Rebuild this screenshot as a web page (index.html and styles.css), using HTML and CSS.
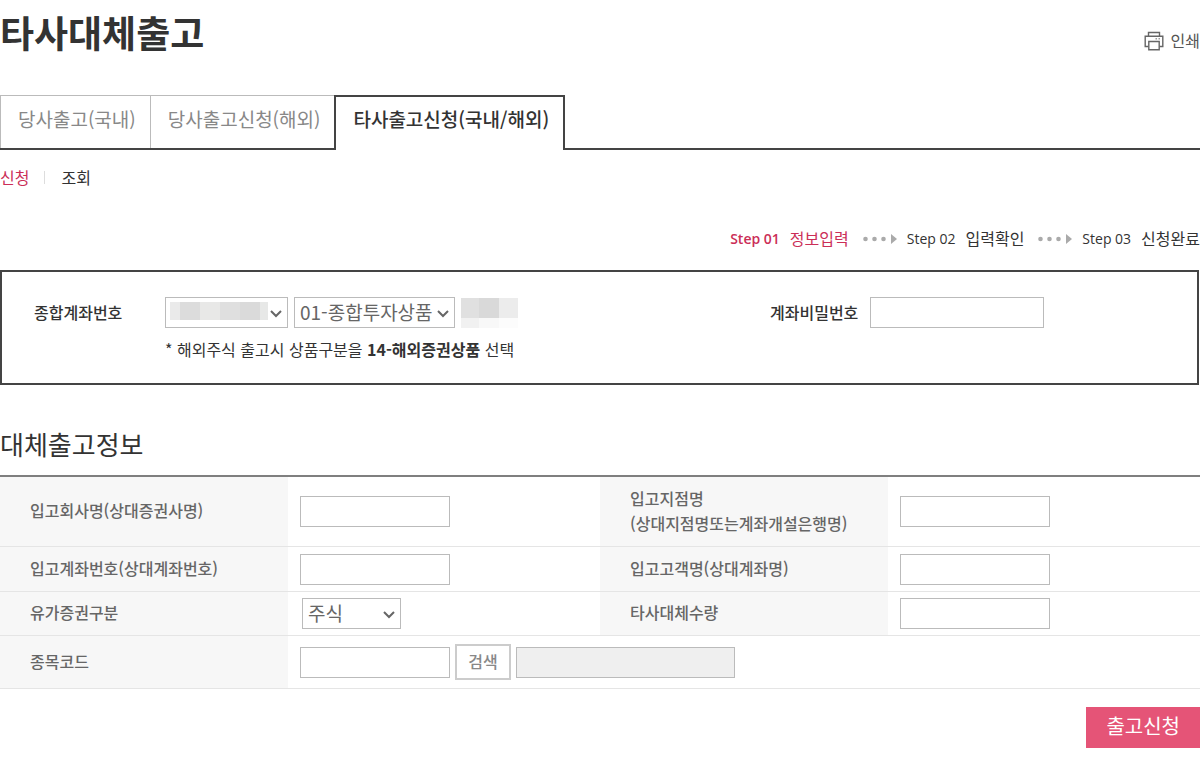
FILE: index.html
```html
<!DOCTYPE html>
<html lang="ko">
<head>
  <meta charset="UTF-8">
  <meta name="viewport" content="width=device-width, initial-scale=1.0">
  <title>타사대체출고</title>
  <link rel="stylesheet" href="styles.css">
</head>
<body>
  <header class="page-head">
    <h1>타사대체출고</h1>
    <button type="button" class="print-btn" onclick="window.print()">
      <svg width="20" height="20" viewBox="0 0 20 20" fill="none" stroke="#666" stroke-width="1.4" aria-hidden="true">
        <path d="M4.5 5V1.5h11V5M4.5 15.5H1.2V5.3h17.6v10.2h-3.3"/>
        <path d="M4.8 10.5h10.4v8.3H4.8z"/>
        <path d="M11.5 7.8H13M14.5 7.8H16" stroke="#999"/>
      </svg>
      인쇄
    </button>
  </header>

  <nav class="tabs">
    <a href="#">당사출고(국내)</a>
    <a href="#">당사출고신청(해외)</a>
    <a href="#" class="active">타사출고신청(국내/해외)</a>
  </nav>

  <nav class="sub-menu">
    <a href="#" class="active">신청</a>
    <a href="#">조회</a>
  </nav>

  <ol class="steps">
    <li class="active"><span class="num">Step 01</span>정보입력</li>
    <li>
      <svg width="34" height="10" viewBox="0 0 34 10" fill="#aaa" aria-hidden="true"><circle cx="2.5" cy="5" r="2.3"/><circle cx="11.5" cy="5" r="2.3"/><circle cx="20.5" cy="5" r="2.3"/><path d="M28 0l6 5-6 5z"/></svg>
      <span class="num">Step 02</span>입력확인
    </li>
    <li>
      <svg width="34" height="10" viewBox="0 0 34 10" fill="#aaa" aria-hidden="true"><circle cx="2.5" cy="5" r="2.3"/><circle cx="11.5" cy="5" r="2.3"/><circle cx="20.5" cy="5" r="2.3"/><path d="M28 0l6 5-6 5z"/></svg>
      <span class="num">Step 03</span>신청완료
    </li>
  </ol>

  <form id="transferForm">
    <div class="account-box">
      <div class="account">
        <label for="accountNo">종합계좌번호</label>
        <div>
          <div class="fields">
            <select id="accountNo" class="account-no" name="accountNo">
              <option value=""></option>
            </select>
            <select class="product" name="product" aria-label="상품구분">
              <option>01-종합투자상품</option>
              <option>14-해외증권상품</option>
            </select>
            <span class="masked-name"></span>
          </div>
          <p class="note">* 해외주식 출고시 상품구분을 <strong>14-해외증권상품</strong> 선택</p>
        </div>
      </div>
      <div class="password">
        <label for="accountPw">계좌비밀번호</label>
        <input type="password" id="accountPw" name="accountPw">
      </div>
    </div>

    <h2>대체출고정보</h2>
    <table class="info-table">
      <colgroup>
        <col class="col-th"><col class="col-td"><col class="col-th"><col class="col-td">
      </colgroup>
      <tbody>
        <tr class="tall">
          <th scope="row"><label for="company">입고회사명(상대증권사명)</label></th>
          <td><div class="fields"><input type="text" id="company" name="company"></div></td>
          <th scope="row"><label for="branch">입고지점명<br>(상대지점명또는계좌개설은행명)</label></th>
          <td><div class="fields"><input type="text" id="branch" name="branch"></div></td>
        </tr>
        <tr>
          <th scope="row"><label for="targetAccount">입고계좌번호(상대계좌번호)</label></th>
          <td><div class="fields"><input type="text" id="targetAccount" name="targetAccount"></div></td>
          <th scope="row"><label for="customer">입고고객명(상대계좌명)</label></th>
          <td><div class="fields"><input type="text" id="customer" name="customer"></div></td>
        </tr>
        <tr class="type-row">
          <th scope="row"><label for="stockType">유가증권구분</label></th>
          <td>
            <div class="fields">
              <select id="stockType" name="stockType">
                <option>주식</option>
              </select>
            </div>
          </td>
          <th scope="row"><label for="quantity">타사대체수량</label></th>
          <td><div class="fields"><input type="text" id="quantity" name="quantity"></div></td>
        </tr>
        <tr class="search-row">
          <th scope="row"><label for="stockCode">종목코드</label></th>
          <td colspan="3">
            <div class="fields">
              <input type="text" id="stockCode" name="stockCode">
              <button type="button" class="search-btn">검색</button>
              <input type="text" class="stock-name" name="stockName" aria-label="종목명" readonly>
            </div>
          </td>
        </tr>
      </tbody>
    </table>

    <div class="actions">
      <button type="submit" class="submit-btn">출고신청</button>
    </div>
  </form>
</body>
</html>
```
FILE: styles.css
```css
* {
  box-sizing: border-box;
}
body {
  margin: 0;
  font-family: "Noto Sans CJK KR", sans-serif;
  font-size: 16px;
  line-height: 25px;
  color: #333;
  background: #fff;
}
a {
  color: inherit;
  text-decoration: none;
}
button,
input,
select {
  font-family: inherit;
  margin: 0;
}
button {
  cursor: pointer;
}

/* header */
.page-head {
  display: flex;
  justify-content: space-between;
  align-items: flex-start;
  height: 95px;
}
h1 {
  margin: 7px 0 0;
  font-size: 37px;
  line-height: 50px;
  font-weight: 700;
}
.print-btn {
  display: flex;
  align-items: center;
  gap: 7px;
  margin-top: 28px;
  padding: 0;
  border: none;
  background: none;
  color: #555;
  font-size: 16px;
  line-height: 25px;
}

/* tabs */
.tabs {
  display: flex;
  height: 55px;
  border-bottom: 2px solid #444;
}
.tabs a {
  height: 53px;
  padding: 0 14px 0 17px;
  border: 1px solid #bbb;
  border-width: 1px 0 0 1px;
  font-size: 19px;
  line-height: 46px;
  color: #888;
}
.tabs .active {
  height: 55px;
  border: 2px solid #444;
  border-bottom: none;
  background: #fff;
  font-weight: 500;
  line-height: 44px;
  color: #333;
}
.sub-menu {
  display: flex;
  align-items: center;
  margin-top: 15px;
}
.sub-menu a + a {
  margin-left: 15px;
  padding-left: 16px;
  line-height: 13px;
  border-left: 1px solid #ddd;
}
.sub-menu .active {
  color: #cb2e57;
}

/* steps */
.steps {
  display: flex;
  justify-content: flex-end;
  gap: 14px;
  margin: 36px 0 19px;
  padding: 0;
  list-style: none;
}
.steps li {
  display: flex;
  align-items: center;
}
.steps svg {
  margin-right: 10px;
}
.steps .num {
  margin-right: 10px;
  font-family: "Open Sans", sans-serif;
  font-size: 14px;
}
.steps .active {
  color: #cb2e57;
}
.steps .active .num {
  font-weight: 600;
}

/* form controls */
input,
select {
  height: 31px;
  border: 1px solid #bbb;
  border-radius: 0;
  background-color: #fff;
  color: #666;
}
input {
  width: 150px;
  padding: 0 6px;
  font-size: 16px;
}
select {
  appearance: none;
  padding: 0 20px 3px 5px;
  font-size: 19px;
  background-image: url("data:image/svg+xml,%3Csvg xmlns='http://www.w3.org/2000/svg' width='12' height='8' fill='none' stroke='%23666' stroke-width='2'%3E%3Cpath d='M1 1l5 5 5-5'/%3E%3C/svg%3E");
  background-repeat: no-repeat;
  background-position: right 5px top 12px;
}
.fields {
  display: flex;
  align-items: center;
  gap: 6px;
}

/* account */
.account-box {
  display: flex;
  margin-right: 1px;
  padding: 25px 0 21px 32px;
  border: 2px solid #444;
}
.account-box label {
  line-height: 31px;
  font-weight: 500;
}
.account {
  display: flex;
  flex: 0 0 736px;
}
.account label {
  width: 131px;
}
.account-no {
  width: 123px;
  background-image:
    url("data:image/svg+xml,%3Csvg xmlns='http://www.w3.org/2000/svg' width='12' height='8' fill='none' stroke='%23666' stroke-width='2'%3E%3Cpath d='M1 1l5 5 5-5'/%3E%3C/svg%3E"),
    linear-gradient(90deg, #eaeaea 10px, #dcdcdc 10px 30px, #e8e8e7 30px 50px, #dfdfdf 50px 70px, #dadada 70px 90px, #e7e8e7 90px);
  background-position: right 5px top 12px, 4px 4px;
  background-size: auto, 98px 18px;
}
.product {
  width: 161px;
}
.masked-name {
  width: 57px;
  height: 30px;
  background:
    linear-gradient(90deg, #e0e0e0 18px, #d9d9d9 18px 38px, #ececec 38px) 0 0 / 100% 20px no-repeat,
    linear-gradient(90deg, #f1f1f1 18px, #f8f8f8 18px 38px, #fcfcfc 38px);
}
.note {
  margin: 9px 0 0;
  font-size: 16px;
}
.note strong {
  font-weight: 700;
}
.password {
  display: flex;
}
.password label {
  width: 100px;
}
.password input {
  width: 174px;
}

/* transfer info */
h2 {
  margin: 39px 0 11px;
  font-size: 26px;
  line-height: 40px;
  font-weight: 400;
}
.info-table {
  width: 100%;
  border-top: 2px solid #7f7f7f;
  border-spacing: 0;
  table-layout: fixed;
}
.col-th {
  width: 24%;
}
.col-td {
  width: 26%;
}
.info-table tr {
  height: 45px;
}
.info-table .tall {
  height: 70px;
}
.info-table .type-row {
  height: 44px;
}
.info-table .search-row {
  height: 53px;
}
.info-table th,
.info-table td {
  padding: 0 12px;
  border-bottom: 1px solid #e5e5e5;
}
.info-table th {
  padding: 0 0 2px 30px;
  background: #f7f7f7;
  color: #666;
  font-weight: 500;
  text-align: left;
}
.info-table .fields {
  gap: 5px;
}
.info-table select {
  width: 99px;
  margin-left: 2px;
}
.search-btn {
  width: 56px;
  height: 36px;
  padding: 0 0 2px;
  border: 2px solid #ccc;
  background: #fff;
  color: #888;
  font-size: 16px;
  font-weight: 500;
}
.info-table .stock-name {
  width: 219px;
  background: #efefef;
}
.actions {
  display: flex;
  justify-content: flex-end;
  margin-top: 18px;
}
.submit-btn {
  height: 41px;
  padding: 0 20px 4px;
  border: none;
  background: #e55477;
  color: #fff;
  font-size: 20px;
}
```
